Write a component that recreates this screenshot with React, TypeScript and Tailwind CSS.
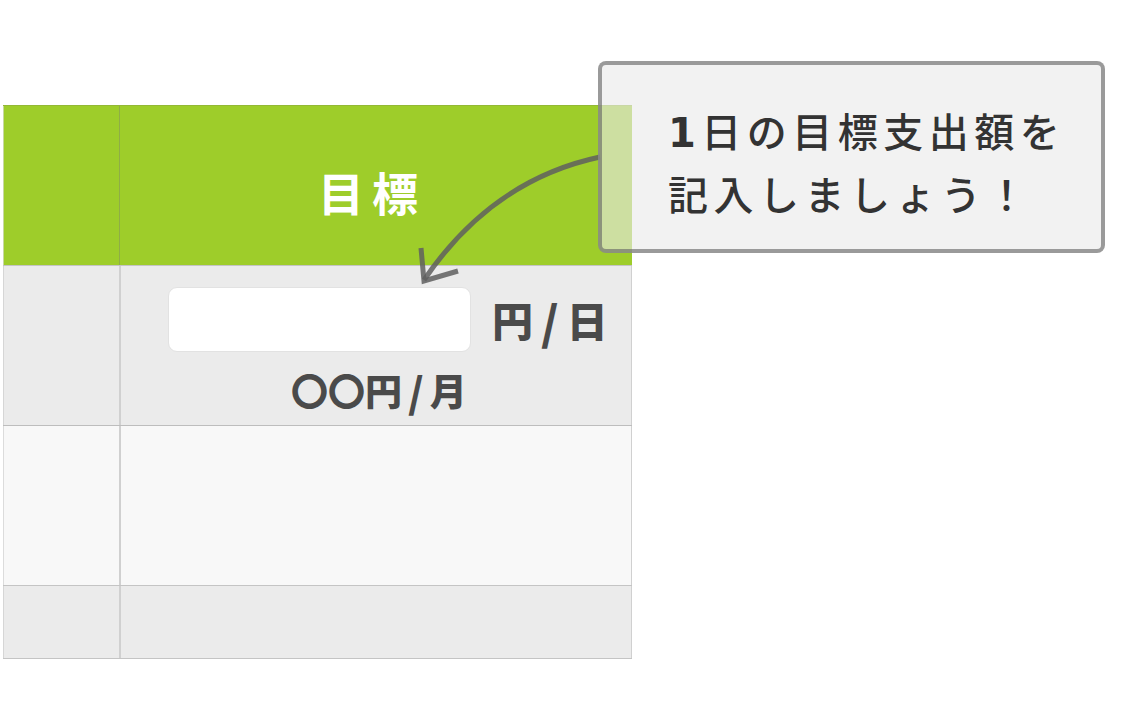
import React from "react";

const jp = { fontFamily: '"Noto Sans CJK JP", "Noto Sans", sans-serif' };

export default function App() {
  return (
    <div className="relative w-[1125px] h-[725px] bg-white overflow-hidden" style={jp}>
      <div className="pt-[105px] pl-[3px]">
        <div className="w-[629px] flex flex-col">
          {/* header */}
          <div className="flex h-[160px] bg-[#9ecd2a] border-t border-[#93b835]">
            <div className="w-[116px] border-l border-[#c8d8a0]" />
            <div className="flex-1 border-l border-[#8fad45] flex items-center justify-center pt-[10px] pr-[8px]">
              <span className="text-white font-bold text-[46px] tracking-[8px] leading-none">目標</span>
            </div>
          </div>
          {/* row 2 */}
          <div className="flex h-[160px] bg-[#ebebeb] border-t border-[#c4c4c4]">
            <div className="w-[116px] border-l border-[#d6d6d6]" />
            <div className="flex-1 border-l-2 border-r border-[#d0d0d0] flex flex-col pt-[21px]">
              <div className="flex items-center">
                <div className="w-[303px] h-[65px] bg-white rounded-[9px] border border-[#e2e2e2] ml-[47px]" />
                <span className="ml-[21px] text-[#4a4a4a] font-black text-[41px] leading-none flex items-center">
                  <span>円</span>
                  <span className="mx-[8px] text-[46px]">/</span>
                  <span>日</span>
                </span>
              </div>
              <div className="mt-[18px] ml-[170px] text-[#4a4a4a] font-black text-[37px] leading-none flex items-center">
                <span>〇〇円</span>
                <span className="mx-[6px] text-[41px]">/</span>
                <span>月</span>
              </div>
            </div>
          </div>
          {/* row 3 */}
          <div className="flex h-[160px] bg-[#f8f8f8] border-t border-[#bdbdbd]">
            <div className="w-[116px] border-l border-[#dcdcdc]" />
            <div className="flex-1 border-l-2 border-r border-[#d0d0d0]" />
          </div>
          {/* row 4 */}
          <div className="flex h-[74px] bg-[#ebebeb] border-t border-b border-[#c4c4c4]">
            <div className="w-[116px] border-l border-[#d6d6d6]" />
            <div className="flex-1 border-l-2 border-r border-[#d0d0d0]" />
          </div>
        </div>
      </div>

      {/* arrow */}
      <svg className="absolute inset-0 pointer-events-none" width="1125" height="725" viewBox="0 0 1125 725">
        <path d="M600 157 Q492 180 424 280" fill="none" stroke="rgba(95,95,95,0.85)" strokeWidth="5" />
        <path d="M421 248 L424 281 L458 271" fill="none" stroke="rgba(95,95,95,0.85)" strokeWidth="5" />
      </svg>

      {/* callout */}
      <div className="absolute left-[598px] top-[61px] w-[507px] h-[192px] rounded-[8px] border-[4px] border-[rgba(100,100,100,0.62)] bg-[rgba(234,234,234,0.62)] pl-[66px] pt-[35px]">
        <div className="text-[#333] text-[40px] leading-[60px] tracking-[5.5px] font-medium">
          <span className="font-bold" style={{ fontFamily: '"DejaVu Sans", sans-serif' }}>1</span>日の目標支出額を
          <br />
          記入しましょう！
        </div>
      </div>
    </div>
  );
}
